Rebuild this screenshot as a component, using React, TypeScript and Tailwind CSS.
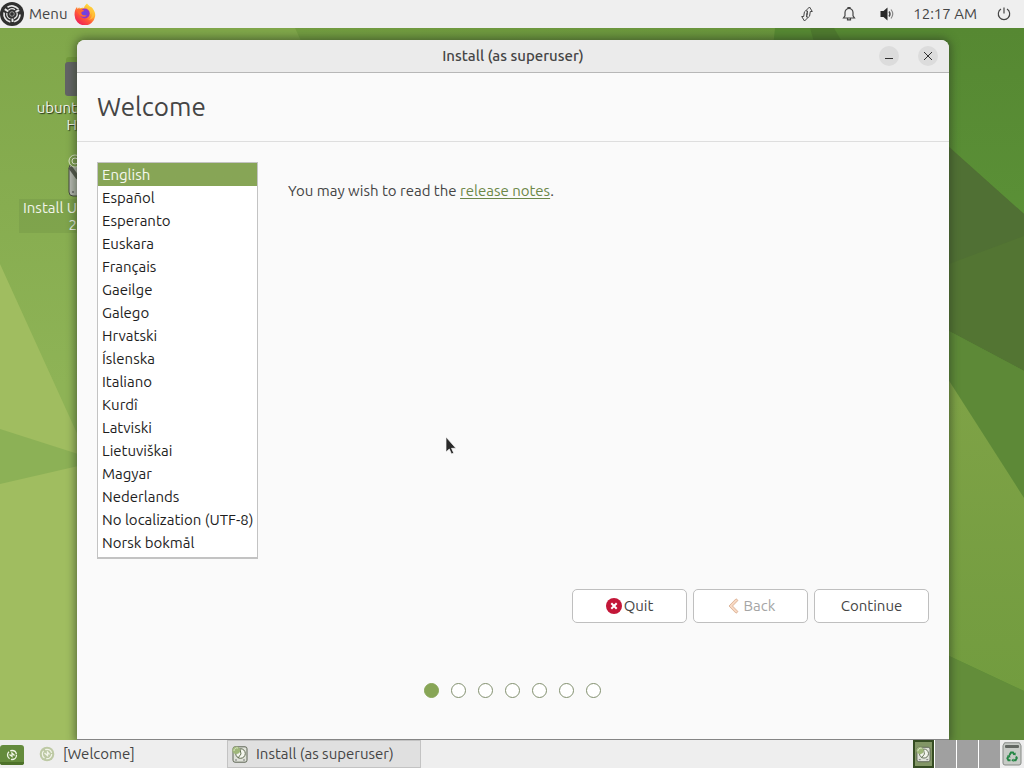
import { useState } from "react";

const languages = [
  "English", "Español", "Esperanto", "Euskara", "Français", "Gaeilge", "Galego", "Hrvatski", "Íslenska",
  "Italiano", "Kurdî", "Latviski", "Lietuviškai", "Magyar", "Nederlands", "No localization (UTF-8)", "Norsk bokmål",
];

const steps = ["Welcome", "Keyboard", "Updates", "Disk", "Location", "User", "Install"];

function MateMark() {
  return (
    <g fill="none" stroke="currentColor">
      <path d="M7.500 5.300a8 8 0 0 1 10.800 1.800M20 12.500a8 8 0 0 1-5.800 7.200M10.300 19.800A8 8 0 0 1 4.100 10.500" strokeWidth="1.700" />
      <path d="M8.500 8.200a5.200 5.200 0 0 1 6.500-.5M17 10.700a5.200 5.200 0 0 1-3 6M10.500 17a5.200 5.200 0 0 1-3.600-6" strokeWidth="1.300" />
      <path d="m4.800 7.200 3.500 2.300M19.200 8.200l-3.700 1.600M12.400 16.500l.2 3.500" strokeWidth="2" />
      <circle cx="12" cy="12" r="2.300" strokeWidth=".8" opacity=".7" />
    </g>
  );
}

function MenuLogo() {
  return (
    <svg viewBox="0 0 24 24" className="size-6 text-[#e8e8e8]" aria-hidden="true">
      <circle cx="12" cy="12" r="12" fill="#303030" />
      <MateMark />
    </svg>
  );
}

function FirefoxIcon() {
  return (
    <svg viewBox="0 0 22 22" className="size-[22px]" aria-hidden="true">
      <defs>
        <linearGradient id="fox" x1="0.85" y1="0.05" x2="0.2" y2="0.95">
          <stop offset="0" stopColor="#fff04a" />
          <stop offset="0.35" stopColor="#ffb02e" />
          <stop offset="0.65" stopColor="#ff5638" />
          <stop offset="1" stopColor="#ed1e5b" />
        </linearGradient>
        <radialGradient id="globe">
          <stop offset="0" stopColor="#5b4bea" />
          <stop offset="1" stopColor="#9a30c9" />
        </radialGradient>
      </defs>
      <path d="M13 0.5c1.2 1.5 2.2 2.3 3.3 3.2 1-.1 1.5.6 2.4 1.9 2 2.8 2.9 5.1 2.4 7.9A10.3 10.3 0 0 1 .6 12.2C.3 8.8 1.400 5.800 3 4l.6 2 1.600-1.800.5 1.300c1.600-.9 3-.9 4.300-.5C10.600 3 11.500 1.600 13 .5Z" fill="url(#fox)" />
      <circle cx="10.800" cy="10.500" r="4.900" fill="url(#globe)" />
      <path d="M3.500 6.500c2.500-.7 5-.3 7 1.600-1.600.2-2.700.6-3.200 1.500-.2 1.700 1 2.600 2.500 2.700 1.500.1 2 .3 3-.1-1 2-4.500 2.200-6.700.2C4 10.600 3.300 8.600 3.500 6.500Z" fill="#ff6a31" />
      <path d="M12.500 4.200c2.800 1.500 4.200 4.100 3.500 7 1.100-.7 1.600-1.700 1.700-2.800 1.300 3.700-.4 7.400-3.700 8.700 4.200-.5 6.300-3.200 6.300-6.600-.2-2.800-1.600-5.200-4.100-6.800Z" fill="#ffc33c" opacity=".75" />
    </svg>
  );
}

function Wallpaper() {
  return (
    <svg viewBox="0 28 1024 712" preserveAspectRatio="none" className="absolute inset-0 size-full" aria-hidden="true">
      <defs>
        <linearGradient id="left" x1="0" y1="0" x2="0" y2="1">
          <stop offset="0" stopColor="#80a74a" />
          <stop offset="0.5" stopColor="#8eb356" />
        </linearGradient>
        <linearGradient id="top" x1="0" y1="0" x2="1" y2="0">
          <stop offset="0" stopColor="#739d41" />
          <stop offset="1" stopColor="#64913a" />
        </linearGradient>
        <linearGradient id="right" x1="0" y1="0" x2="0" y2="1">
          <stop offset="0" stopColor="#568832" />
          <stop offset="0.3" stopColor="#5b9137" />
        </linearGradient>
        <linearGradient id="lime" x1="0" y1="0" x2="0" y2="1">
          <stop offset="0" stopColor="#80a347" />
          <stop offset="1" stopColor="#729c3f" />
        </linearGradient>
      </defs>
      <path d="M0 28h1024v712H0Z" fill="url(#left)" />
      <path d="M295 28H1024V300H420Z" fill="url(#top)" />
      <path d="M775 28H1024V740H700Z" fill="url(#right)" />
      <path d="M810 28h24l8 14h-28Z" fill="#4e7a2e" />
      <path d="M0 264 85 451 500 740H0Z" fill="#a0bd60" />
      <path d="M0 429 100 461 0 484Z" fill="#8cb156" />
      <path d="M930 130 1024 214V371L930 321Z" fill="#537533" />
      <path d="M930 130 1024 214V236L930 271Z" fill="#507034" />
      <path d="M930 321 1024 371V498L930 355Z" fill="#5d8937" />
      <path d="M930 351 1024 498V691L930 647Z" fill="url(#lime)" />
      <path d="M930 647 1024 691V740H930Z" fill="#638d3a" />
    </svg>
  );
}

function DesktopIcons() {
  return (
    <div className="absolute top-7 left-0 flex w-[77px] flex-col items-end text-right leading-[17px] text-[#f1f4ea] [text-shadow:1px_1px_1px_#26351a]">
      <div className="flex h-[98px] flex-col items-end">
        <svg viewBox="0 0 12 42" className="h-[42px] w-3 shrink-0" aria-hidden="true">
          <path d="M1 4q0-3 3-3h8v28H1Z" fill="#739b3d" />
          <path d="M0 9q0-3 3-3h9v34H3q-3 0-3-3Z" fill="#626365" />
        </svg>
        <span className="mt-px">ubunt<br />H</span>
      </div>
      <div className="flex flex-col items-end">
        <svg viewBox="0 0 9 45" className="h-[45px] w-[9px]" aria-hidden="true">
          <path d="M10 10H5q-4 0-4 4v24q0 4 4 4h5Z" fill="#b6b9b3" stroke="#44483f" />
          <path d="m2 13 8 11" stroke="#53564e" strokeWidth="4" />
          <circle cx="7" cy="7" r="6" fill="#7e9f50" stroke="#e2ebcd" />
          <circle cx="7" cy="7" r="3" fill="none" stroke="#eef3df" />
          <circle cx="5" cy="38" r="1" fill="#666" />
        </svg>
        <span className="bg-[#536c34]/15 pl-1 [text-shadow:none]">Install U<br />2</span>
      </div>
    </div>
  );
}

function InstallerIcon({ className }: { className: string }) {
  return (
    <svg viewBox="0 0 16 17" className={className} aria-hidden="true">
      <rect x="1" y=".8" width="14" height="15.400" rx="2" fill="#dfe2d9" stroke="#5d6454" strokeWidth="1" />
      <circle cx="8.500" cy="7.500" r="4.800" fill="#f3f5ed" stroke="#5e6951" />
      <path d="m8 3 1 5-3 4" fill="none" stroke="#647355" />
      <circle cx="4.300" cy="4.300" r="3.800" fill="#9fb77a" />
      <path d="M2 5a3 3 0 0 1 4-3" fill="none" stroke="#dce7c8" />
      <path d="M3 14h2M11 14h2" stroke="#777" />
    </svg>
  );
}

function TopPanel() {
  return (
    <header className="flex h-7 shrink-0 items-center bg-[#efefef] text-[#454545]">
      <button type="button" className="flex h-7 items-center gap-[5px]">
        <MenuLogo />
        <span>Menu</span>
      </button>
      <button type="button" aria-label="Firefox" className="ml-[7px]">
        <FirefoxIcon />
      </button>
      <div className="ml-auto flex items-center pr-3">
        <button type="button" aria-label="Network" className="mr-[26px]">
          <svg viewBox="0 0 16 16" className="size-4" fill="none" stroke="currentColor" strokeWidth="1" strokeLinejoin="round" aria-hidden="true">
            <path d="M8 9.500 8.500 5H6.500L10.500 1l2.800 4.500h-2l-.8 5" />
            <path d="M8 6.500 7.500 11h2l-4 4-2.800-4.500h2l.8-5" />
          </svg>
        </button>
        <button type="button" aria-label="Notifications" className="mr-[22px]">
          <svg viewBox="0 0 16 16" className="size-4" fill="none" stroke="currentColor" strokeWidth="1.200" aria-hidden="true">
            <path d="M2.500 12h11L12 9.800V6.500a4 4 0 0 0-8 0v3.300ZM7 2.500V1.500h2v1M6.500 12.500v1.300h3v-1.300" />
          </svg>
        </button>
        <button type="button" aria-label="Volume" className="mr-[18px]">
          <svg viewBox="0 0 16 16" className="size-4" fill="none" stroke="currentColor" aria-hidden="true">
            <path d="M1.500 5h3l4-3.500v13L4.500 11h-3Z" fill="#292929" stroke="none" />
            <path d="M10 5.500q2 2.500 0 5" strokeWidth="1.400" />
            <path d="M12 3.500q3.500 4.500 0 9" stroke="#888" strokeWidth="1.200" />
          </svg>
        </button>
        <time>12:17 AM</time>
        <button type="button" aria-label="Power" className="ml-[19px]">
          <svg viewBox="0 0 16 16" className="size-4" fill="none" stroke="currentColor" strokeWidth="1.200" aria-hidden="true">
            <path d="M5 3a5.700 5.700 0 1 0 6 0M8 1.500V7.500" />
          </svg>
        </button>
      </div>
    </header>
  );
}

const dialogButton =
  "flex h-[34px] w-[115px] items-center justify-center rounded-[5px] border border-[#bfbfbf] bg-white text-[#454545]";

function InstallerWindow() {
  const [language, setLanguage] = useState("English");
  return (
    <section className="relative flex flex-1 flex-col overflow-hidden rounded-t-lg border-b border-[#858585] bg-[#fafafa] text-[#454545] shadow-[0_0_8px_2px_rgba(45,60,35,0.6)]">
      <div className="grid h-[33px] shrink-0 grid-cols-[1fr_auto_1fr] items-center border-b border-[#b7b7b7] bg-[#ebebeb] px-[11px]">
        <h1 className="col-start-2 font-medium">Install (as superuser)</h1>
        <div className="flex justify-end gap-[19px]">
          <button type="button" aria-label="Minimize" className="flex size-5 items-center justify-center rounded-full bg-[#dcdcdc]">
            <svg viewBox="0 0 10 10" className="size-2.5" stroke="#303030" aria-hidden="true"><path d="M1 7.500h8" /></svg>
          </button>
          <button type="button" aria-label="Close" className="flex size-5 items-center justify-center rounded-full bg-[#dcdcdc]">
            <svg viewBox="0 0 10 10" className="size-2.5" stroke="#303030" aria-hidden="true"><path d="m1 1 8 8m0-8L1 9" /></svg>
          </button>
        </div>
      </div>
      <div className="flex h-[69px] shrink-0 items-center border-b border-[#dedede] px-5">
        <h2 className="text-[26px] leading-8">Welcome</h2>
      </div>
      <div className="flex flex-1 flex-col px-5 pt-5">
        <div className="flex gap-[30px]">
          <select
            size={17}
            aria-label="Language"
            value={language}
            onChange={(event) => setLanguage(event.target.value)}
            className="h-[397px] w-[161px] appearance-none overflow-hidden border border-b-2 border-[#c3c3c3] bg-white p-0 text-[#1e1e1e] outline-none"
          >
            {languages.map((name) => (
              <option
                key={name}
                className="h-[23px] px-1 pt-[3px] pb-0 checked:bg-linear-to-b checked:from-[#87a556] checked:to-[#87a556] checked:[-webkit-text-fill-color:#f5f8ee]"
              >
                {name}
              </option>
            ))}
          </select>
          <p className="mt-[18px] leading-[22px]">
            You may wish to read the{" "}
            <a href="#release-notes" className="text-[#6c8748] underline underline-offset-2">release notes</a>.
          </p>
        </div>
        <div className="mt-[30px] flex justify-end gap-1.5">
          <button type="button" className={dialogButton}>
            <svg viewBox="0 0 16 16" className="mr-0.5 size-4" aria-hidden="true">
              <circle cx="8" cy="8" r="8" fill="#c31638" />
              <path d="m5.300 5.300 5.400 5.400m0-5.400-5.400 5.400" stroke="#fff" strokeWidth="2" />
            </svg>
            Quit
          </button>
          <button type="button" disabled className={dialogButton}>
            <svg viewBox="0 0 16 16" className="mr-0.5 size-4" aria-hidden="true">
              <path d="M10 .8 3 8l7 7.200 2-1.600L6.500 8 12 2.400Z" fill="#f8d9c3" stroke="#d7a98b" strokeWidth=".8" />
            </svg>
            <span className="text-[#a5a5a5]">Back</span>
          </button>
          <button type="button" className={dialogButton}>Continue</button>
        </div>
        <ol aria-label="Progress" className="mt-[60px] flex justify-center gap-3 pr-0.5">
          {steps.map((step, index) => (
            <li
              key={step}
              aria-label={step}
              className={
                index === 0
                  ? "size-[15px] rounded-full border border-[#87a556] bg-[#87a556]"
                  : "size-[15px] rounded-full border border-[#82906f] bg-white"
              }
            />
          ))}
        </ol>
      </div>
    </section>
  );
}

function BottomPanel() {
  return (
    <footer className="flex h-7 shrink-0 items-stretch bg-[#eeeeee] text-[#454545]">
      <button type="button" aria-label="Show desktop" className="self-end pb-[3px]">
        <svg viewBox="0 0 24 20" className="h-5 w-6" aria-hidden="true">
          <rect width="24" height="20" rx="3" fill="#648b3c" />
          <path d="M0 17h24v1q0 2-3 2H3q-3 0-3-2Z" fill="#4d7129" />
          <circle cx="12" cy="10" r="4.500" fill="none" stroke="#f0f5e6" strokeWidth="1.300" strokeDasharray="8 1.420" />
          <path d="M9.500 9.500 12 11.500V8l2.500 2.500" fill="none" stroke="#f0f5e6" strokeWidth="1.300" />
        </svg>
      </button>
      <button type="button" className="ml-[15px] flex w-[188px] items-center gap-2">
        <svg viewBox="0 0 16 16" className="size-4" fill="none" stroke="#f1f4e8" aria-hidden="true">
          <circle cx="8" cy="8" r="7.300" fill="#bdc9a4" stroke="none" />
          <circle cx="8" cy="8" r="4.700" strokeWidth="1.200" strokeDasharray="8 1.840" />
          <path d="M5.500 7 8.500 9.500V6l2 2.500" strokeWidth="1.300" />
        </svg>
        [Welcome]
      </button>
      <button type="button" className="flex w-[194px] items-center gap-2 border border-[#c3c3c3] bg-[#e0e0e0] pl-1">
        <InstallerIcon className="h-[17px] w-4" />
        Install (as superuser)
      </button>
      <div className="ml-auto flex gap-px bg-white">
        <button type="button" aria-label="Workspace 1" className="flex w-[21px] items-center justify-center border-2 border-[#354c22] bg-[#829665]">
          <InstallerIcon className="h-[19px] w-[15px]" />
        </button>
        <button type="button" aria-label="Workspace 2" className="w-[21px] bg-[#a0a0a0]" />
        <button type="button" aria-label="Workspace 3" className="w-[21px] bg-[#a0a0a0]" />
        <button type="button" aria-label="Workspace 4" className="w-[21px] bg-[#a0a0a0]" />
      </div>
      <button type="button" aria-label="Trash" className="ml-0.5 flex items-center pr-0.5">
        <svg viewBox="0 0 20 24" className="h-6 w-5" aria-hidden="true">
          <path d="M2.500.8h15l1.500 3V21q0 2-2 2H3q-2 0-2-2V3.800Z" fill="#c7cbc6" stroke="#858985" />
          <rect x="3" y="3" width="14" height="3" rx="1" fill="#626762" />
          <g fill="none" stroke="#258645" strokeWidth="2">
            <path d="m7.500 13 1.500-2.500h2l1.500 2.300M14 14.500l.8 1.500-1.200 2.200h-2.100M8.500 18.200H6.400l-1-2 1.100-2" />
          </g>
          <path d="m13.700 10.500-.2 3-2.800-1.200ZM11.500 16.500v3.500L9.300 18.200ZM5 13.500l3-.5.3 3Z" fill="#258645" />
        </svg>
      </button>
    </footer>
  );
}

export default function App() {
  return (
    <div className="flex min-h-screen flex-col font-['Ubuntu','Noto_Sans',sans-serif] text-[15px] leading-5">
      <TopPanel />
      <main className="relative flex flex-1 flex-col overflow-hidden pt-3 pr-[75px] pl-[77px]">
        <Wallpaper />
        <DesktopIcons />
        <InstallerWindow />
        <svg viewBox="0 0 12 20" className="absolute top-[408px] left-[445px] h-5 w-3" aria-hidden="true">
          <path d="M1 1v15l3.300-3 2.200 5 2.200-1-2.200-4.700h4.400Z" fill="#292929" stroke="#f8f8f8" strokeWidth=".7" />
        </svg>
      </main>
      <BottomPanel />
    </div>
  );
}
